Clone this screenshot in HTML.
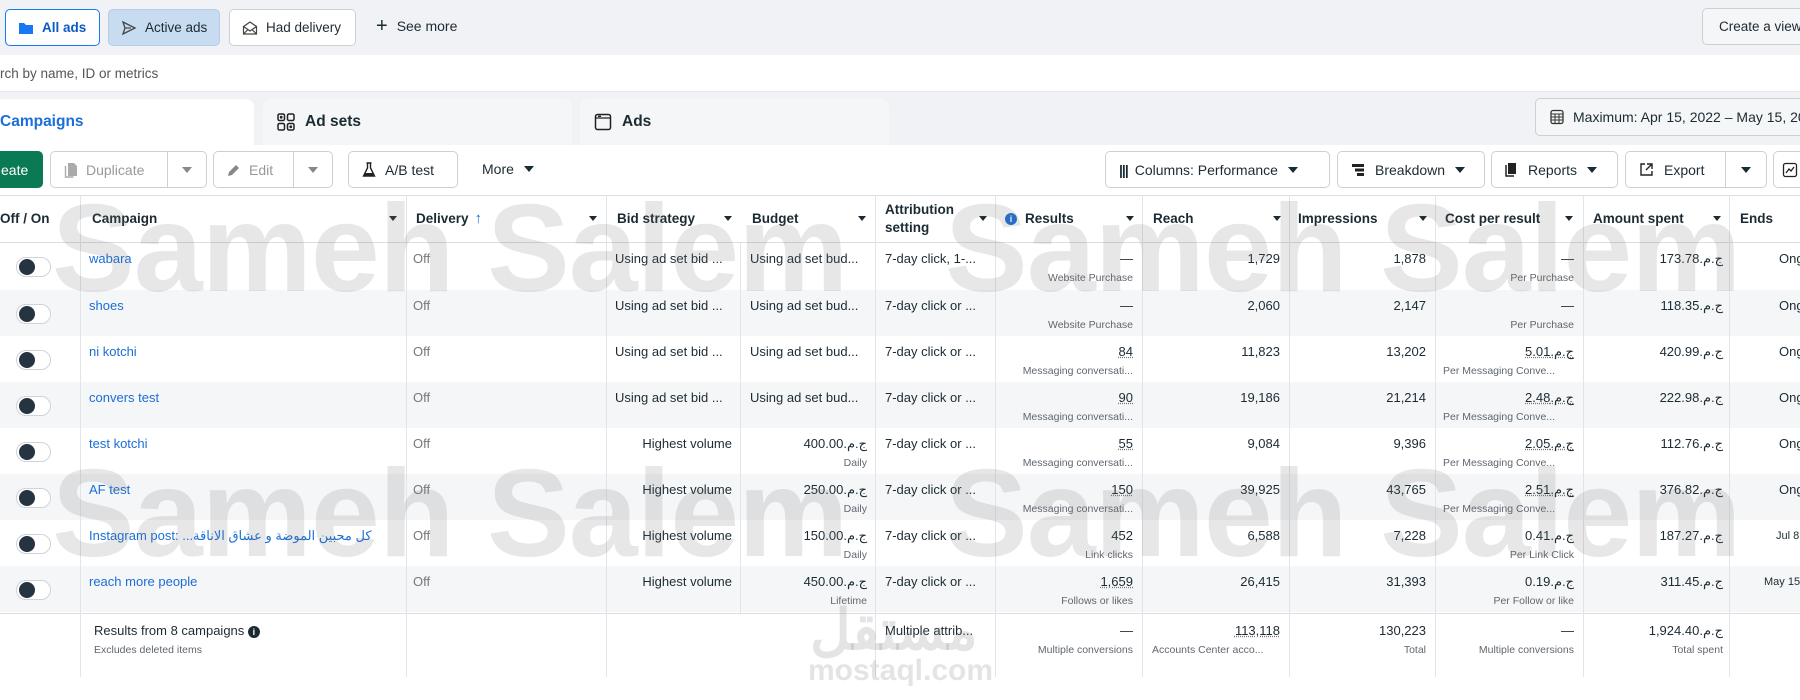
<!DOCTYPE html>
<html><head><meta charset="utf-8"><style>
*{box-sizing:border-box;margin:0;padding:0}
body{width:1800px;height:700px;overflow:hidden;background:#fff;font-family:"Liberation Sans","Noto Sans CJK SC",sans-serif;color:#1c2b33;position:relative;font-size:13px}
.abs{position:absolute}
.topbar{left:0;top:0;width:1800px;height:55px;background:#f0f2f5}
.btn{position:absolute;height:37px;border:1px solid #ccd0d5;border-radius:5px;background:#fff;display:flex;align-items:center;font-size:13.5px;white-space:nowrap}
.search{left:0;top:55px;width:1800px;height:37px;background:#fff;border-bottom:1px solid #e6e8eb}
.tabsbg{left:0;top:92px;width:1800px;height:53px;background:#f0f2f5}
.tab{position:absolute;top:99px;height:46px;border-radius:8px 8px 0 0;background:#f5f6f8;font-weight:bold;font-size:15.5px;display:flex;align-items:center}
.tb{position:absolute;top:151px;height:37px;display:flex;align-items:center;font-size:14px;border:1px solid #ccd0d5;border-radius:5px;background:#fff;white-space:nowrap}
.dd{display:inline-block;width:0;height:0;border-left:5px solid transparent;border-right:5px solid transparent;border-top:6px solid #1c2b33}
.hdr{left:0;top:195px;width:1800px;height:48px;border-top:1px solid #dadde1;border-bottom:1px solid #dadde1;background:#fff}
.hc{position:absolute;top:0;height:47px;display:flex;align-items:center;font-weight:bold;font-size:13.5px;white-space:nowrap}
.ha{position:absolute;top:20px;width:0;height:0;border-left:4px solid transparent;border-right:4px solid transparent;border-top:5px solid #1c2b33}
.row{position:absolute;left:0;width:1800px;height:46px}
.g{background:#f5f6f7}
.vl{position:absolute;top:195px;width:1px;background:#e1e4e8}
.t{position:absolute;top:8px;line-height:16px;white-space:nowrap;font-size:13px}
.s{position:absolute;top:28px;line-height:14px;white-space:nowrap;font-size:10.5px;color:#606770}
.r{text-align:right}
.lnk{color:#1a6ed8}
.off{color:#777}
.u{text-decoration:underline dotted #777}
.tog{position:absolute;left:16px;top:14px;width:35px;height:20px;border:1px solid #cfd3d8;border-radius:10px;background:#fff}
.tog:after{content:"";position:absolute;left:2px;top:1px;width:16px;height:16px;border-radius:50%;background:#263340}
.wm{position:absolute;font-weight:bold;font-size:124px;color:rgba(110,110,110,0.17);white-space:nowrap;pointer-events:none;letter-spacing:-1px}
</style></head><body>

<div class="abs topbar"></div>
<div class="btn" style="left:5px;top:9px;width:95px;border:1.5px solid #1877f2;color:#0a5bc4;font-weight:bold;padding-left:12px">
<svg width="16" height="14" viewBox="0 0 16 14" style="margin-right:8px"><path d="M1 2h5l2 2h7v9H1z" fill="#1877f2"/></svg>All ads</div>
<div class="btn" style="left:108px;top:9px;width:112px;background:#c7dcf1;border-color:#b5cde6;padding-left:12px">
<svg width="16" height="16" viewBox="0 0 16 16" style="margin-right:8px"><path d="M2 2l12 6-12 6 2-6z" fill="none" stroke="#444" stroke-width="1.3"/><path d="M4 8h6" stroke="#444" stroke-width="1.2"/></svg>Active ads</div>
<div class="btn" style="left:229px;top:9px;width:127px;padding-left:12px">
<svg width="16" height="16" viewBox="0 0 16 16" style="margin-right:8px"><path d="M1.5 6.5L8 2l6.5 4.5V14h-13z M1.5 6.5L8 11l6.5-4.5 M1.5 14L6 9.5 M14.5 14L10 9.5" fill="none" stroke="#444" stroke-width="1.2"/></svg>Had delivery</div>
<div class="abs" style="left:376px;top:17px;font-size:14px;display:flex;align-items:center"><span style="font-size:20px;margin-right:9px;line-height:18px">+</span>See more</div>
<div class="btn" style="left:1702px;top:8px;width:120px;padding-left:16px;background:#f5f6f7">Create a view</div>

<div class="abs search"></div>
<div class="abs" style="left:0;top:66px;font-size:13.5px;color:#555">rch by name, ID or metrics</div>

<div class="abs tabsbg"></div>
<div class="tab" style="left:-10px;width:264px;background:#fff;color:#1a6ed8;padding-left:10px">Campaigns</div>
<div class="tab" style="left:263px;width:309px;padding-left:14px">
<svg width="18" height="18" viewBox="0 0 18 18" style="margin-right:10px"><rect x="1" y="1" width="6.5" height="6.5" rx="1.5" fill="none" stroke="#222" stroke-width="1.5"/><rect x="10.5" y="1" width="6.5" height="6.5" rx="1.5" fill="none" stroke="#222" stroke-width="1.5"/><rect x="1" y="10.5" width="6.5" height="6.5" rx="1.5" fill="none" stroke="#222" stroke-width="1.5"/><rect x="10.5" y="10.5" width="6.5" height="6.5" rx="1.5" fill="none" stroke="#222" stroke-width="1.5"/><circle cx="4.2" cy="4.2" r="1.4" fill="#222"/><circle cx="13.8" cy="13.8" r="1.4" fill="#222"/></svg>Ad sets</div>
<div class="tab" style="left:580px;width:309px;padding-left:14px">
<svg width="18" height="18" viewBox="0 0 18 18" style="margin-right:10px"><rect x="1.5" y="1.5" width="15" height="15" rx="2" fill="none" stroke="#222" stroke-width="1.5"/><path d="M1.5 5h15 M4 3.3h3" stroke="#222" stroke-width="1.3"/></svg>Ads</div>
<div class="btn" style="left:1535px;top:98px;width:300px;height:38px;padding-left:13px;font-size:14px;background:#f5f6f7">
<svg width="16" height="16" viewBox="0 0 16 16" style="margin-right:8px"><rect x="2" y="1.5" width="12" height="13" rx="2" fill="none" stroke="#333" stroke-width="1.3"/><path d="M2 5h12 M2 8h12 M2 11h12 M6 5v9.5 M10 5v9.5" stroke="#333" stroke-width="1"/></svg>Maximum: Apr 15, 2022 – May 15, 2022</div>

<!-- toolbar -->
<div class="tb" style="left:-10px;width:53px;background:#0a7a55;border-color:#0a7a55;color:#fff;padding-left:10px;font-weight:500">eate</div>
<div class="tb" style="left:50px;width:117px;color:#999;padding-left:13px;border-right:none;border-radius:5px 0 0 5px">
<svg width="14" height="16" viewBox="0 0 14 16" style="margin-right:8px"><path d="M4 1h6l3 3v10H4z" fill="#aaa"/><path d="M1.5 4v11h8" fill="none" stroke="#aaa" stroke-width="1.4"/></svg>Duplicate</div>
<div class="tb" style="left:167px;width:40px;justify-content:center;border-radius:0 5px 5px 0"><span class="dd" style="border-top-color:#888"></span></div>
<div class="tb" style="left:213px;width:80px;color:#999;padding-left:13px;border-right:none;border-radius:5px 0 0 5px">
<svg width="14" height="14" viewBox="0 0 14 14" style="margin-right:8px"><path d="M1 13l1-4 7-7 3 3-7 7z" fill="#888"/></svg>Edit</div>
<div class="tb" style="left:293px;width:40px;justify-content:center;border-radius:0 5px 5px 0"><span class="dd" style="border-top-color:#888"></span></div>
<div class="tb" style="left:348px;width:110px;padding-left:13px">
<svg width="14" height="16" viewBox="0 0 14 16" style="margin-right:9px"><path d="M4.5 1h5 M5.5 1v5L1.5 14h11L8.5 6V1" fill="none" stroke="#222" stroke-width="1.4"/><path d="M3 11h8l1.5 3h-11z" fill="#222"/></svg>A/B test</div>
<div class="abs" style="left:482px;top:161px;font-size:14px;display:flex;align-items:center">More<span class="dd" style="margin-left:10px"></span></div>

<div class="tb" style="left:1105px;width:225px;padding-left:13px"><span style="font-weight:900;margin-right:7px;letter-spacing:-1px">|||</span>Columns: Performance<span class="dd" style="margin-left:10px"></span></div>
<div class="tb" style="left:1337px;width:148px;padding-left:13px"><svg width="14" height="14" viewBox="0 0 14 14" style="margin-right:10px"><path d="M1 1h12v3H1z M4 5.5h9v3H4z M6 10h7v3H6z" fill="#222"/></svg>Breakdown<span class="dd" style="margin-left:10px"></span></div>
<div class="tb" style="left:1491px;width:127px;padding-left:13px"><svg width="14" height="15" viewBox="0 0 14 15" style="margin-right:9px"><path d="M3 1h8v11H3z" fill="#222"/><path d="M1 3v11h8" fill="none" stroke="#222" stroke-width="1.5"/></svg>Reports<span class="dd" style="margin-left:10px"></span></div>
<div class="tb" style="left:1625px;width:100px;padding-left:13px;border-right:none;border-radius:5px 0 0 5px"><svg width="15" height="15" viewBox="0 0 15 15" style="margin-right:10px"><path d="M6 2H2v11h11V9 M8 2h5v5 M13 2L7 8" fill="none" stroke="#222" stroke-width="1.4"/></svg>Export</div>
<div class="tb" style="left:1725px;width:42px;justify-content:center;border-radius:0 5px 5px 0"><span class="dd"></span></div>
<div class="tb" style="left:1773px;width:50px;padding-left:8px"><svg width="16" height="16" viewBox="0 0 16 16"><rect x="1.5" y="1.5" width="13" height="13" rx="2" fill="none" stroke="#222" stroke-width="1.3"/><path d="M4 11l3-4 2 2 3-4" fill="none" stroke="#222" stroke-width="1.3"/></svg></div>

<!-- header -->
<div class="abs hdr"></div>
<div class="hc" style="left:0;top:195px">Off / On</div>
<div class="hc" style="left:92px;top:195px">Campaign</div><div class="ha" style="left:389px;top:216px"></div>
<div class="hc" style="left:416px;top:195px">Delivery <span style="color:#1a6ed8;margin-left:6px;font-size:15px">↑</span></div><div class="ha" style="left:589px;top:216px"></div>
<div class="hc" style="left:617px;top:195px">Bid strategy</div><div class="ha" style="left:724px;top:216px"></div>
<div class="hc" style="left:752px;top:195px">Budget</div><div class="ha" style="left:858px;top:216px"></div>
<div class="hc" style="left:885px;top:195px;line-height:18px">Attribution<br>setting</div><div class="ha" style="left:979px;top:216px"></div>
<div class="hc" style="left:1005px;top:195px"><span style="display:inline-block;width:12px;height:12px;border-radius:50%;background:#1a6ed8;color:#fff;font-size:9px;text-align:center;line-height:12px;margin-right:8px">i</span>Results</div><div class="ha" style="left:1126px;top:216px"></div>
<div class="hc" style="left:1153px;top:195px">Reach</div><div class="ha" style="left:1273px;top:216px"></div>
<div class="hc" style="left:1298px;top:195px">Impressions</div><div class="ha" style="left:1419px;top:216px"></div>
<div class="hc" style="left:1445px;top:195px">Cost per result</div><div class="ha" style="left:1565px;top:216px"></div>
<div class="hc" style="left:1593px;top:195px">Amount spent</div><div class="ha" style="left:1713px;top:216px"></div>
<div class="hc" style="left:1740px;top:195px">Ends</div>

<!-- rows -->
<div class="row" style="top:243px"><div class="tog"></div>
<div class="t lnk" style="left:89px">wabara</div><div class="t off" style="left:413px">Off</div>
<div class="t" style="left:615px">Using ad set bid ...</div><div class="t" style="left:750px">Using ad set bud...</div>
<div class="t" style="left:885px">7-day click, 1-...</div>
<div class="t r" style="right:667px">—</div><div class="s r" style="right:667px">Website Purchase</div>
<div class="t r" style="right:520px">1,729</div><div class="t r" style="right:374px">1,878</div>
<div class="t r" style="right:226px">—</div><div class="s r" style="right:226px">Per Purchase</div>
<div class="t r" style="right:77px">173.78<bdi>ج.م.</bdi></div><div class="t" style="left:1779px">Ongoing</div></div>

<div class="row g" style="top:290px"><div class="tog"></div>
<div class="t lnk" style="left:89px">shoes</div><div class="t off" style="left:413px">Off</div>
<div class="t" style="left:615px">Using ad set bid ...</div><div class="t" style="left:750px">Using ad set bud...</div>
<div class="t" style="left:885px">7-day click or ...</div>
<div class="t r" style="right:667px">—</div><div class="s r" style="right:667px">Website Purchase</div>
<div class="t r" style="right:520px">2,060</div><div class="t r" style="right:374px">2,147</div>
<div class="t r" style="right:226px">—</div><div class="s r" style="right:226px">Per Purchase</div>
<div class="t r" style="right:77px">118.35<bdi>ج.م.</bdi></div><div class="t" style="left:1779px">Ongoing</div></div>

<div class="row" style="top:336px"><div class="tog"></div>
<div class="t lnk" style="left:89px">ni kotchi</div><div class="t off" style="left:413px">Off</div>
<div class="t" style="left:615px">Using ad set bid ...</div><div class="t" style="left:750px">Using ad set bud...</div>
<div class="t" style="left:885px">7-day click or ...</div>
<div class="t r u" style="right:667px">84</div><div class="s r" style="right:667px">Messaging conversati...</div>
<div class="t r" style="right:520px">11,823</div><div class="t r" style="right:374px">13,202</div>
<div class="t r u" style="right:226px">5.01<bdi>ج.م.</bdi></div><div class="s" style="left:1443px">Per Messaging Conve...</div>
<div class="t r" style="right:77px">420.99<bdi>ج.م.</bdi></div><div class="t" style="left:1779px">Ongoing</div></div>

<div class="row g" style="top:382px"><div class="tog"></div>
<div class="t lnk" style="left:89px">convers test</div><div class="t off" style="left:413px">Off</div>
<div class="t" style="left:615px">Using ad set bid ...</div><div class="t" style="left:750px">Using ad set bud...</div>
<div class="t" style="left:885px">7-day click or ...</div>
<div class="t r u" style="right:667px">90</div><div class="s r" style="right:667px">Messaging conversati...</div>
<div class="t r" style="right:520px">19,186</div><div class="t r" style="right:374px">21,214</div>
<div class="t r u" style="right:226px">2.48<bdi>ج.م.</bdi></div><div class="s" style="left:1443px">Per Messaging Conve...</div>
<div class="t r" style="right:77px">222.98<bdi>ج.م.</bdi></div><div class="t" style="left:1779px">Ongoing</div></div>

<div class="row" style="top:428px"><div class="tog"></div>
<div class="t lnk" style="left:89px">test kotchi</div><div class="t off" style="left:413px">Off</div>
<div class="t r" style="right:1068px">Highest volume</div>
<div class="t r" style="right:933px">400.00<bdi>ج.م.</bdi></div><div class="s r" style="right:933px">Daily</div>
<div class="t" style="left:885px">7-day click or ...</div>
<div class="t r u" style="right:667px">55</div><div class="s r" style="right:667px">Messaging conversati...</div>
<div class="t r" style="right:520px">9,084</div><div class="t r" style="right:374px">9,396</div>
<div class="t r u" style="right:226px">2.05<bdi>ج.م.</bdi></div><div class="s" style="left:1443px">Per Messaging Conve...</div>
<div class="t r" style="right:77px">112.76<bdi>ج.م.</bdi></div><div class="t" style="left:1779px">Ongoing</div></div>

<div class="row g" style="top:474px"><div class="tog"></div>
<div class="t lnk" style="left:89px">AF test</div><div class="t off" style="left:413px">Off</div>
<div class="t r" style="right:1068px">Highest volume</div>
<div class="t r" style="right:933px">250.00<bdi>ج.م.</bdi></div><div class="s r" style="right:933px">Daily</div>
<div class="t" style="left:885px">7-day click or ...</div>
<div class="t r u" style="right:667px">150</div><div class="s r" style="right:667px">Messaging conversati...</div>
<div class="t r" style="right:520px">39,925</div><div class="t r" style="right:374px">43,765</div>
<div class="t r u" style="right:226px">2.51<bdi>ج.م.</bdi></div><div class="s" style="left:1443px">Per Messaging Conve...</div>
<div class="t r" style="right:77px">376.82<bdi>ج.م.</bdi></div><div class="t" style="left:1779px">Ongoing</div></div>

<div class="row" style="top:520px"><div class="tog"></div>
<div class="t lnk" style="left:89px">Instagram post: <bdi>كل محبين الموضة و عشاق الاناقة...</bdi></div><div class="t off" style="left:413px">Off</div>
<div class="t r" style="right:1068px">Highest volume</div>
<div class="t r" style="right:933px">150.00<bdi>ج.م.</bdi></div><div class="s r" style="right:933px">Daily</div>
<div class="t" style="left:885px">7-day click or ...</div>
<div class="t r" style="right:667px">452</div><div class="s r" style="right:667px">Link clicks</div>
<div class="t r" style="right:520px">6,588</div><div class="t r" style="right:374px">7,228</div>
<div class="t r" style="right:226px">0.41<bdi>ج.م.</bdi></div><div class="s r" style="right:226px">Per Link Click</div>
<div class="t r" style="right:77px">187.27<bdi>ج.م.</bdi></div><div class="t" style="left:1776px;font-size:11px">Jul 8, 2022</div></div>

<div class="row g" style="top:566px"><div class="tog"></div>
<div class="t lnk" style="left:89px">reach more people</div><div class="t off" style="left:413px">Off</div>
<div class="t r" style="right:1068px">Highest volume</div>
<div class="t r" style="right:933px">450.00<bdi>ج.م.</bdi></div><div class="s r" style="right:933px">Lifetime</div>
<div class="t" style="left:885px">7-day click or ...</div>
<div class="t r u" style="right:667px">1,659</div><div class="s r" style="right:667px">Follows or likes</div>
<div class="t r" style="right:520px">26,415</div><div class="t r" style="right:374px">31,393</div>
<div class="t r" style="right:226px">0.19<bdi>ج.م.</bdi></div><div class="s r" style="right:226px">Per Follow or like</div>
<div class="t r" style="right:77px">311.45<bdi>ج.م.</bdi></div><div class="t" style="left:1764px;font-size:11px">May 15, 2022</div></div>

<div class="row" style="top:613px;border-top:1px solid #dadde1;height:64px">
<div class="t" style="left:94px;top:9px">Results from 8 campaigns <span style="display:inline-block;width:12px;height:12px;border-radius:50%;background:#1c2b33;color:#fff;font-size:9px;text-align:center;line-height:12px;font-weight:bold">i</span></div>
<div class="s" style="left:94px;top:29px">Excludes deleted items</div>
<div class="t" style="left:885px;top:9px">Multiple attrib...</div>
<div class="t r" style="right:667px;top:9px">—</div><div class="s r" style="right:667px;top:29px">Multiple conversions</div>
<div class="t r u" style="right:520px;top:9px">113,118</div><div class="s" style="left:1152px;top:29px">Accounts Center acco...</div>
<div class="t r" style="right:374px;top:9px">130,223</div><div class="s r" style="right:374px;top:29px">Total</div>
<div class="t r" style="right:226px;top:9px">—</div><div class="s r" style="right:226px;top:29px">Multiple conversions</div>
<div class="t r" style="right:77px;top:9px">1,924.40<bdi>ج.م.</bdi></div><div class="s r" style="right:77px;top:29px">Total spent</div></div>

<!-- vertical lines -->
<div class="vl" style="left:80px;height:482px"></div>
<div class="vl" style="left:406px;height:482px"></div>
<div class="vl" style="left:606px;height:482px"></div>
<div class="vl" style="left:740px;top:243px;height:370px"></div>
<div class="vl" style="left:875px;height:482px"></div>
<div class="vl" style="left:995px;height:482px"></div>
<div class="vl" style="left:1142px;height:482px"></div>
<div class="vl" style="left:1289px;height:482px"></div>
<div class="vl" style="left:1435px;height:482px"></div>
<div class="vl" style="left:1583px;height:482px"></div>
<div class="vl" style="left:1729px;height:482px"></div>

<!-- watermarks -->
<div class="wm" style="left:52px;top:178px">Sameh Salem</div>
<div class="wm" style="left:945px;top:178px">Sameh Salem</div>
<div class="wm" style="left:52px;top:443px">Sameh Salem</div>
<div class="wm" style="left:945px;top:443px">Sameh Salem</div>
<div class="abs" style="left:810px;top:600px;font-size:56px;font-weight:bold;color:rgba(120,120,120,0.2);font-family:'Liberation Sans','Noto Sans CJK SC',sans-serif;line-height:60px;white-space:nowrap">مستقل</div>
<div class="abs" style="left:808px;top:654px;font-size:30px;font-weight:bold;color:rgba(120,120,120,0.2);line-height:34px;white-space:nowrap">mostaql.com</div>
</body></html>
